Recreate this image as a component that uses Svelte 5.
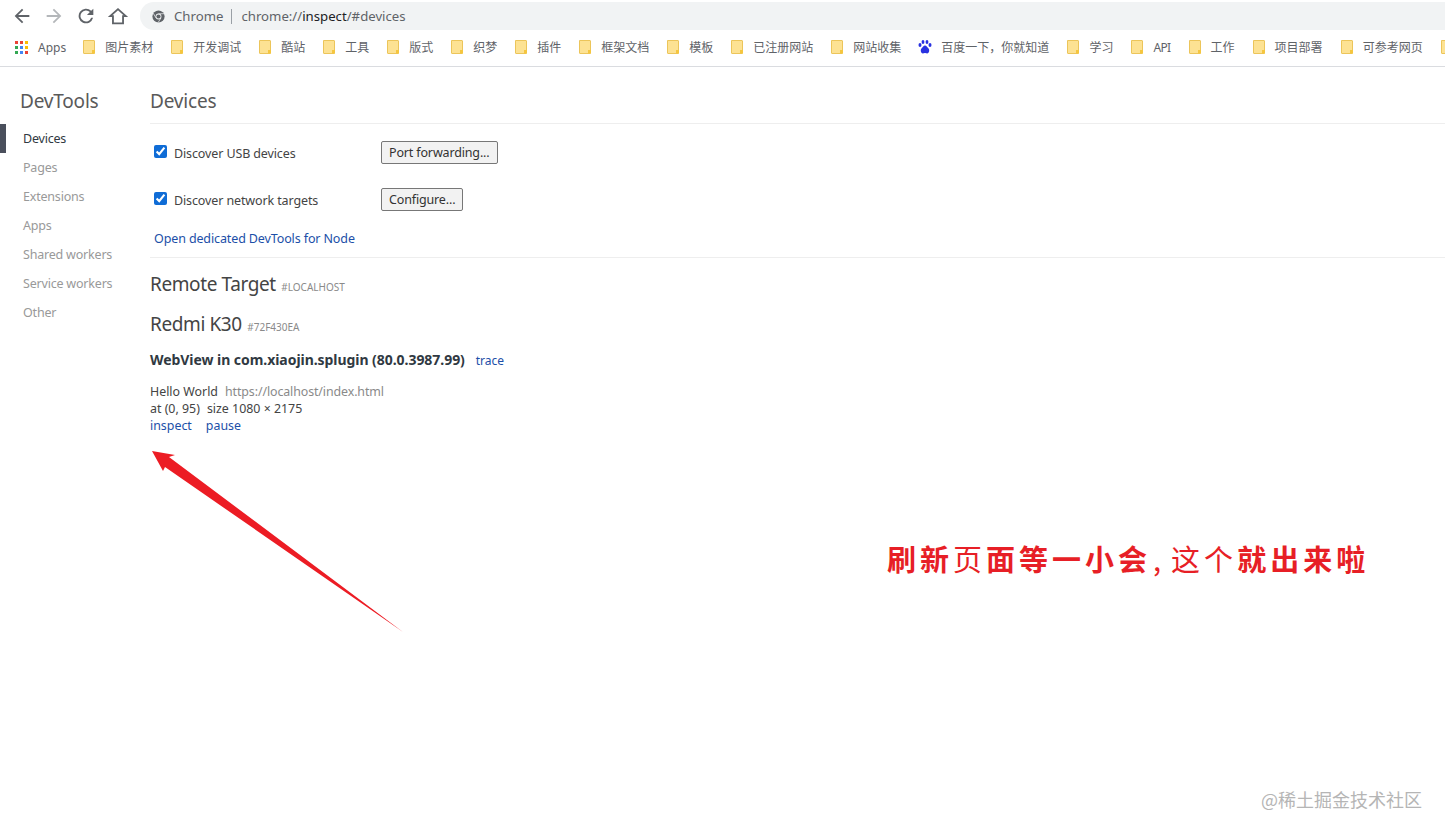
<script>
	const bookmarks = [
		{ name: '图片素材' },
		{ name: '开发调试' },
		{ name: '酷站' },
		{ name: '工具' },
		{ name: '版式' },
		{ name: '织梦' },
		{ name: '插件' },
		{ name: '框架文档' },
		{ name: '模板' },
		{ name: '已注册网站' },
		{ name: '网站收集' },
		{ name: '百度一下，你就知道', baidu: true },
		{ name: '学习' },
		{ name: 'API', latin: true },
		{ name: '工作' },
		{ name: '项目部署' },
		{ name: '可参考网页' },
		{ name: '' }
	];

	const navItems = ['Devices', 'Pages', 'Extensions', 'Apps', 'Shared workers', 'Service workers', 'Other'];

	const appColors = ['#ea4335', '#ea4335', '#fbbc04', '#34a853', '#4285f4', '#fbbc04', '#34a853', '#4285f4', '#ea4335'];
</script>

<div class="browser">
	<div class="toolbar">
		<div class="navBtns">
			<svg viewBox="0 0 24 24"><path d="M20 11H7.8l5.6-5.6L12 4l-8 8 8 8 1.400-1.400L7.800 13H20z" fill="#5f6368" /></svg>
			<svg viewBox="0 0 24 24"><path d="M4 11h12.200l-5.600-5.600L12 4l8 8-8 8-1.400-1.400 5.600-5.600H4z" fill="#b4b7ba" /></svg>
			<svg viewBox="0 0 24 24"><path d="M17.650 6.350A8 8 0 1 0 19.740 14h-2.080a6 6 0 1 1-1.420-6.240L13 11h7V4z" fill="#5f6368" /></svg>
			<svg viewBox="0 0 24 24"><path d="M12 4.500 3.500 12.200H6.500V20H17.500V12.200H20.500z" fill="none" stroke="#5f6368" stroke-width="2" stroke-linejoin="miter" /></svg>
		</div>
		<div class="omnibox">
			<svg class="chromeIcon" width="13" height="13" viewBox="0 0 16 16">
				<circle cx="8" cy="8" r="7.500" fill="#5f6368" />
				<circle cx="8" cy="8" r="3.600" fill="#f1f3f4" />
				<circle cx="8" cy="8" r="2.600" fill="#5f6368" />
				<path d="M8 4.600h7M5 9.800 1.500 4M11 9.800 7.500 15.500" stroke="#f1f3f4" stroke-width="0.9" fill="none" />
			</svg>
			<span class="origin">Chrome</span>
			<span class="sep"></span>
			<span class="url">chrome://<b>inspect</b>/#devices</span>
		</div>
	</div>

	<div class="bookmarks">
		<div class="bookmark apps">
			<span class="appGrid">
				{#each appColors as c}
					<i style="background: {c}"></i>
				{/each}
			</span>
			<span>Apps</span>
		</div>
		{#each bookmarks as b}
			<div class="bookmark" class:baidu={b.baidu} class:latin={b.latin}>
				{#if b.baidu}
					<svg class="bmIcon" width="14" height="14" viewBox="0 0 14 14" fill="#2932e1">
						<ellipse cx="2" cy="5" rx="1.500" ry="2" />
						<ellipse cx="5" cy="2" rx="1.400" ry="2" />
						<ellipse cx="9" cy="2" rx="1.400" ry="2" />
						<ellipse cx="12" cy="5" rx="1.500" ry="2" />
						<path d="M7 5.600c1.600 0 2 1.700 3.300 2.700 1.500 1.200 1.200 5.200-1.300 5.200-1 0-1.200-.4-2-.4s-1 .4-2 .4C2.500 13.500 2.200 9.500 3.700 8.300 5 7.300 5.400 5.600 7 5.600z" />
					</svg>
				{:else}
					<svg class="bmIcon" width="12" height="14" viewBox="0 0 12 14">
						<path d="M.5.5h10.500a.5.500 0 0 1 .5.500v12a.5.500 0 0 1-.5.500H1a.5.500 0 0 1-.5-.500z" fill="#fde293" stroke="#ecc55a" />
						<rect x="9" y="10" width="3" height="3.500" fill="#f5c63f" />
					</svg>
				{/if}
				{#if b.name}<span>{b.name}</span>{/if}
			</div>
		{/each}
	</div>

	<div class="page">
		<aside class="sidebar">
			<h1 class="brand">DevTools</h1>
			<ul class="nav">
				{#each navItems as item, i}
					<li class:active={i === 0}>{item}</li>
				{/each}
			</ul>
		</aside>

		<main class="content">
			<h1 class="title">Devices</h1>
			<section class="settings">
				<div class="row">
					<label><input type="checkbox" checked /><span>Discover USB devices</span></label>
					<button>Port forwarding...</button>
				</div>
				<div class="row">
					<label><input type="checkbox" checked /><span>Discover network targets</span></label>
					<button>Configure...</button>
				</div>
				<a class="nodeLink" href="#node">Open dedicated DevTools for Node</a>
			</section>

			<h2 class="heading remote">Remote Target <small>#LOCALHOST</small></h2>
			<h2 class="heading device">Redmi K30 <small>#72F430EA</small></h2>
			<div class="browserName"><b>WebView in com.xiaojin.splugin (80.0.3987.99)</b><a href="#trace">trace</a></div>
			<div class="target">
				<div>Hello World<span class="targetUrl">https://localhost/index.html</span></div>
				<div>at (0, 95)<span class="targetSize">size 1080 × 2175</span></div>
				<div class="actions"><a href="#inspect">inspect</a><a href="#pause">pause</a></div>
			</div>
		</main>
	</div>

	<!-- annotations painted on top of the screenshot -->
	<svg class="arrow" width="270" height="200" viewBox="0 0 270 200">
		<polygon points="2,1 25,5 19,7 253,182 15,17 13,21" fill="#ec1c24" />
	</svg>
	<div class="note">刷新<span class="thin">页</span>面等一小会<span class="comma thin">,</span><span class="thin">这个</span>就出来啦</div>
	<div class="watermark">@稀土掘金技术社区</div>
</div>

<style>
	:global(body) {
		margin: 0;
		background: #fff;
	}

	.browser {
		position: relative;
		width: 1445px;
		height: 833px;
		overflow: hidden;
		font-family: 'Noto Sans', 'Noto Sans CJK SC', sans-serif;
		color: #303942;
	}

	.toolbar {
		display: flex;
		align-items: center;
		height: 32px;
	}

	.navBtns {
		display: flex;
		padding-left: 6px;
		width: 140px;
		box-sizing: border-box;
	}

	.navBtns svg {
		width: 22px;
		height: 22px;
		margin: 0 5px;
	}

	.omnibox {
		flex: 1;
		display: flex;
		align-items: center;
		height: 28px;
		padding-left: 12px;
		background: #f1f3f4;
		border-radius: 14px 0 0 14px;
		font-size: 13.200px;
		color: #5f6368;
	}

	.chromeIcon {
		margin-right: 9px;
	}

	.sep {
		width: 1px;
		height: 15px;
		margin: 0 9px 0 8px;
		background: #9aa0a6;
	}

	.url b {
		font-weight: 400;
		color: #202124;
	}

	.bookmarks {
		display: flex;
		align-items: center;
		height: 34px;
		box-sizing: content-box;
		padding: 0 0 0 15px;
		border-bottom: 1px solid #dadce0;
		white-space: nowrap;
		font-size: 12px;
		color: #5f6368;
	}

	.bookmark {
		display: flex;
		align-items: center;
		flex: none;
		margin: -4px 18px 0 0;
	}

	.apps {
		margin-right: 17px;
	}

	.baidu {
		margin-left: -1px;
	}

	.baidu .bmIcon {
		margin-right: 9px;
	}

	.latin {
		letter-spacing: -0.6px;
	}

	.appGrid {
		display: grid;
		grid-template-columns: repeat(3, 3px);
		gap: 2px;
		margin-right: 10px;
	}

	.appGrid i {
		display: block;
		height: 3px;
	}

	.bmIcon {
		margin-right: 10px;
	}

	.page {
		display: flex;
	}

	.sidebar {
		flex: none;
		width: 150px;
		box-sizing: border-box;
	}

	.brand {
		margin: 0;
		padding: 21px 0 0 20px;
		font-size: 19px;
		line-height: 27px;
		font-weight: 400;
		color: #5a5a5a;
		letter-spacing: -0.2px;
	}

	.nav {
		list-style: none;
		margin: 9px 0 0;
		padding: 0;
		font-size: 12.500px;
		color: #999;
	}

	.nav li {
		height: 29px;
		line-height: 29px;
		padding-left: 23px;
		letter-spacing: -0.2px;
	}

	.nav li.active {
		color: #303942;
		border-left: 6px solid #4a4f5c;
		padding-left: 17px;
	}

	.content {
		flex: 1;
		min-width: 0;
	}

	.title {
		margin: 0;
		padding: 21px 0 8px;
		height: 27px;
		line-height: 27px;
		font-size: 19px;
		font-weight: 400;
		color: #5a5a5a;
		letter-spacing: -0.2px;
		border-bottom: 1px solid #eee;
	}

	.settings {
		height: 134px;
		box-sizing: border-box;
		padding: 16px 0 0 4px;
		border-bottom: 1px solid #eee;
		font-size: 12.500px;
		letter-spacing: -0.12px;
	}

	.row {
		display: flex;
		align-items: center;
		height: 24px;
		margin-bottom: 23px;
	}

	.row label {
		display: flex;
		align-items: center;
		width: 227px;
		color: #444;
	}

	.row label span {
		padding-top: 2px;
	}

	.row input {
		width: 13px;
		height: 13px;
		margin: -2px 7px 0 0;
		accent-color: #0f6cd6;
	}

	.row button {
		height: 23px;
		padding: 0 7px;
		font: inherit;
		letter-spacing: -0.15px;
		color: #333;
		background: #f2f2f2;
		border: 1px solid #777;
		border-radius: 2px;
	}

	a {
		color: #1c4fa8;
		text-decoration: none;
	}

	.nodeLink {
		display: block;
		margin-top: -4px;
	}

	.heading {
		margin: 0;
		font-size: 19px;
		line-height: 27px;
		font-weight: 400;
		color: #444;
		letter-spacing: -0.4px;
	}

	.heading small {
		margin-left: 1px;
		font-size: 10px;
		letter-spacing: 0;
		color: #8a8a8a;
	}

	.remote {
		margin-top: 13px;
	}

	.device {
		margin-top: 10px;
	}

	.browserName {
		margin-top: 10px;
		font-size: 14px;
		line-height: 18px;
		color: #303942;
	}

	.browserName b {
		font-weight: 700;
		letter-spacing: -0.05px;
	}

	.browserName a {
		margin-left: 11px;
		font-size: 12px;
	}

	.target {
		margin-top: 13px;
		font-size: 12.400px;
		line-height: 17px;
		color: #444;
	}

	.targetUrl {
		margin-left: 7px;
		letter-spacing: -0.1px;
		color: #8a8a8a;
	}

	.targetSize {
		margin-left: 7px;
	}

	.actions a + a {
		margin-left: 14px;
	}

	.arrow {
		position: absolute;
		left: 150px;
		top: 450px;
	}

	.note {
		position: absolute;
		left: 887px;
		top: 538px;
		font-family: 'Noto Sans CJK SC', sans-serif;
		font-size: 29px;
		line-height: 40px;
		font-weight: 700;
		letter-spacing: 4px;
		color: #e71f26;
		white-space: nowrap;
	}

	.thin {
		font-weight: 400;
	}

	.comma {
		padding: 0 6px 0 2px;
	}

	.watermark {
		position: absolute;
		left: 1261px;
		top: 786px;
		font-size: 18px;
		line-height: 26px;
		font-family: 'Noto Sans CJK SC', sans-serif;
		color: #b5b5b5;
		white-space: nowrap;
	}
</style>
